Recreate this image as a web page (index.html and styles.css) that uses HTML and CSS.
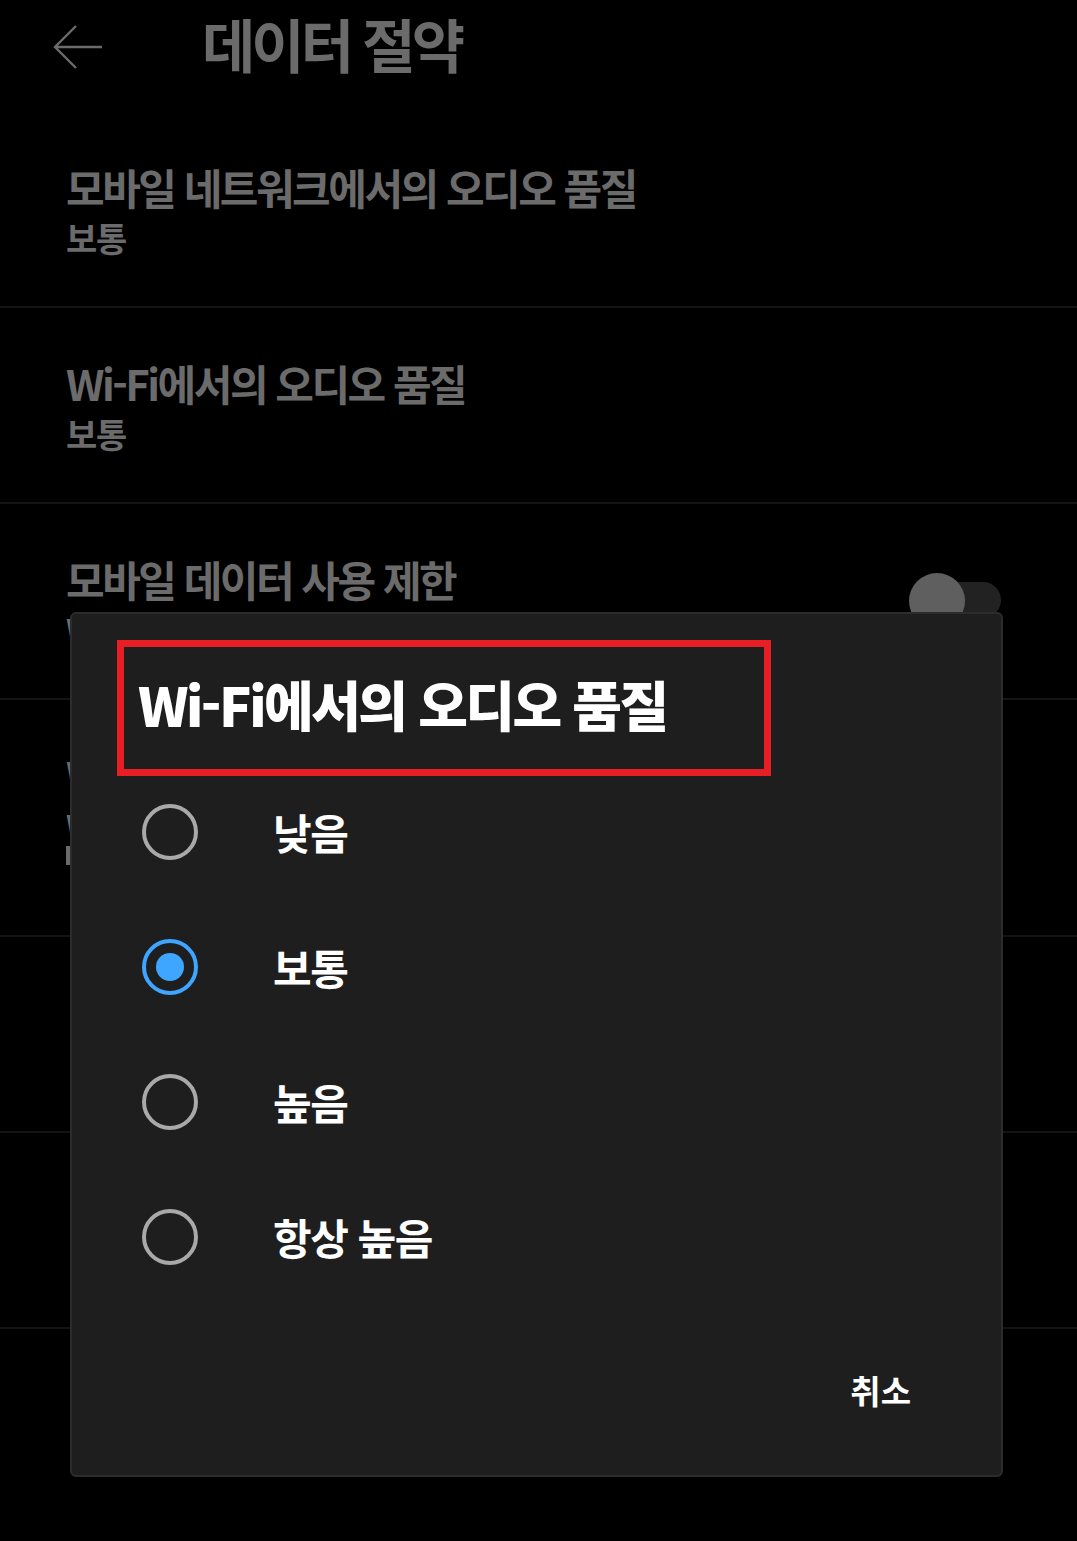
FILE: index.html
```html
<!DOCTYPE html>
<html lang="ko">
<head>
<meta charset="utf-8">
<title>데이터 절약</title>
<link rel="stylesheet" href="styles.css">
</head>
<body>
<div class="screen">
  <header class="appbar">
    <svg class="back" width="52" height="46" viewBox="0 0 52 46" aria-hidden="true">
      <path d="M50 23H3M24 2L3 23l21 21" fill="none" stroke="#6b6b6b" stroke-width="2.4"/>
    </svg>
    <h1 class="page-title">데이터 절약</h1>
  </header>

  <ul class="settings">
    <li class="row">
      <div class="row-title">모바일 네트워크에서의 오디오 품질</div>
      <div class="row-sub">보통</div>
    </li>
    <li class="row">
      <div class="row-title">Wi-Fi에서의 오디오 품질</div>
      <div class="row-sub">보통</div>
    </li>
    <li class="row row-toggle">
      <div class="row-text">
        <div class="row-title">모바일 데이터 사용 제한</div>
        <div class="row-sub">Wi-Fi</div>
      </div>
      <div class="switch"><span class="track"></span><span class="thumb"></span></div>
    </li>
    <li class="row row-tall">
      <div class="row-title">Wi-Fi</div>
      <div class="row-sub">Wi-Fi</div>
      <div class="row-mark"></div>
    </li>
    <li class="row">
      <div class="row-title">ㄷ</div>
      <div class="row-sub">ㄷ</div>
    </li>
    <li class="row"></li>
  </ul>

  <div class="dialog" role="dialog">
    <h2 class="dialog-title">Wi-Fi에서의 오디오 품질</h2>
    <div class="highlight"></div>
    <ul class="options">
      <li class="option"><span class="radio"></span><span class="opt-label">낮음</span></li>
      <li class="option"><span class="radio checked"></span><span class="opt-label">보통</span></li>
      <li class="option"><span class="radio"></span><span class="opt-label">높음</span></li>
      <li class="option"><span class="radio"></span><span class="opt-label">항상 높음</span></li>
    </ul>
    <div class="actions"><span class="btn">취소</span></div>
  </div>
</div>
</body>
</html>
```

FILE: styles.css
```css
* { box-sizing: border-box; }
html, body {
  margin: 0;
  padding: 0;
  background: #000;
}
body {
  font-family: "Noto Sans CJK KR", "Noto Sans", sans-serif;
  font-weight: 700;
  color: #6b6b6b;
}
.screen {
  position: relative;
  width: 1077px;
  height: 1541px;
  overflow: hidden;
  background: #000;
}
.appbar {
  height: 112px;
  display: flex;
  align-items: flex-start;
  padding-top: 10px;
}
.back {
  margin-left: 52px;
  margin-top: 14px;
  flex: none;
}
.page-title {
  margin: 0 0 0 98px;
  font-size: 58px;
  line-height: 66px;
  letter-spacing: -4px;
  font-weight: 700;
  color: #6b6b6b;
}
.settings {
  list-style: none;
  margin: 0;
  padding: 0;
}
.row {
  height: 196px;
  padding: 50px 0 0 66px;
  border-bottom: 2px solid #141414;
}
.row-tall { height: 237px; }
.row-toggle {
  display: flex;
  justify-content: space-between;
  align-items: flex-start;
  padding-right: 76px;
}
.row-title {
  font-size: 42px;
  line-height: 50px;
  letter-spacing: -2.5px;
  white-space: nowrap;
}
.row-sub {
  margin-top: 6px;
  font-size: 34px;
  line-height: 40px;
  letter-spacing: -1.2px;
  white-space: nowrap;
}
.row-mark {
  width: 6px;
  height: 19px;
  margin-top: 0;
  background: #6b6b6b;
}
.switch {
  position: relative;
  width: 92px;
  height: 56px;
  margin-top: 19px;
}
.track {
  position: absolute;
  left: 28px;
  top: 9px;
  width: 64px;
  height: 36px;
  border-radius: 18px;
  background: #222;
}
.thumb {
  position: absolute;
  left: 0;
  top: 0;
  width: 56px;
  height: 56px;
  border-radius: 50%;
  background: #5f5f5f;
}
.dialog {
  position: absolute;
  left: 70px;
  top: 612px;
  width: 933px;
  height: 865px;
  background: #1e1e1e;
  border: 2px solid #2c2c2c;
  border-radius: 6px;
  padding: 60px 0 0 0;
  display: flex;
  flex-direction: column;
}
.dialog-title {
  margin: 0 0 0 66px;
  font-size: 54px;
  line-height: 60px;
  font-weight: 900;
  letter-spacing: -2.5px;
  color: #fff;
  white-space: nowrap;
}
.highlight {
  position: absolute;
  left: 45px;
  top: 26px;
  width: 654px;
  height: 136px;
  border: 7px solid #e81e25;
}
.options {
  list-style: none;
  margin: 30px 0 0 0;
  padding: 0;
}
.option {
  height: 135px;
  display: flex;
  align-items: center;
  padding-left: 70px;
}
.radio {
  width: 56px;
  height: 56px;
  border-radius: 50%;
  border: 4px solid #a9a9a9;
  flex: none;
  position: relative;
}
.radio.checked { border-color: #3ea6ff; }
.radio.checked::after {
  content: "";
  position: absolute;
  left: 10px;
  top: 10px;
  width: 28px;
  height: 28px;
  border-radius: 50%;
  background: #3ea6ff;
}
.opt-label {
  margin-left: 75px;
  font-size: 42px;
  line-height: 50px;
  letter-spacing: -1.5px;
  color: #fff;
}
.actions {
  display: flex;
  justify-content: flex-end;
  padding-right: 90px;
  margin-top: 66px;
}
.btn {
  font-size: 33px;
  line-height: 40px;
  color: #fff;
}
```
